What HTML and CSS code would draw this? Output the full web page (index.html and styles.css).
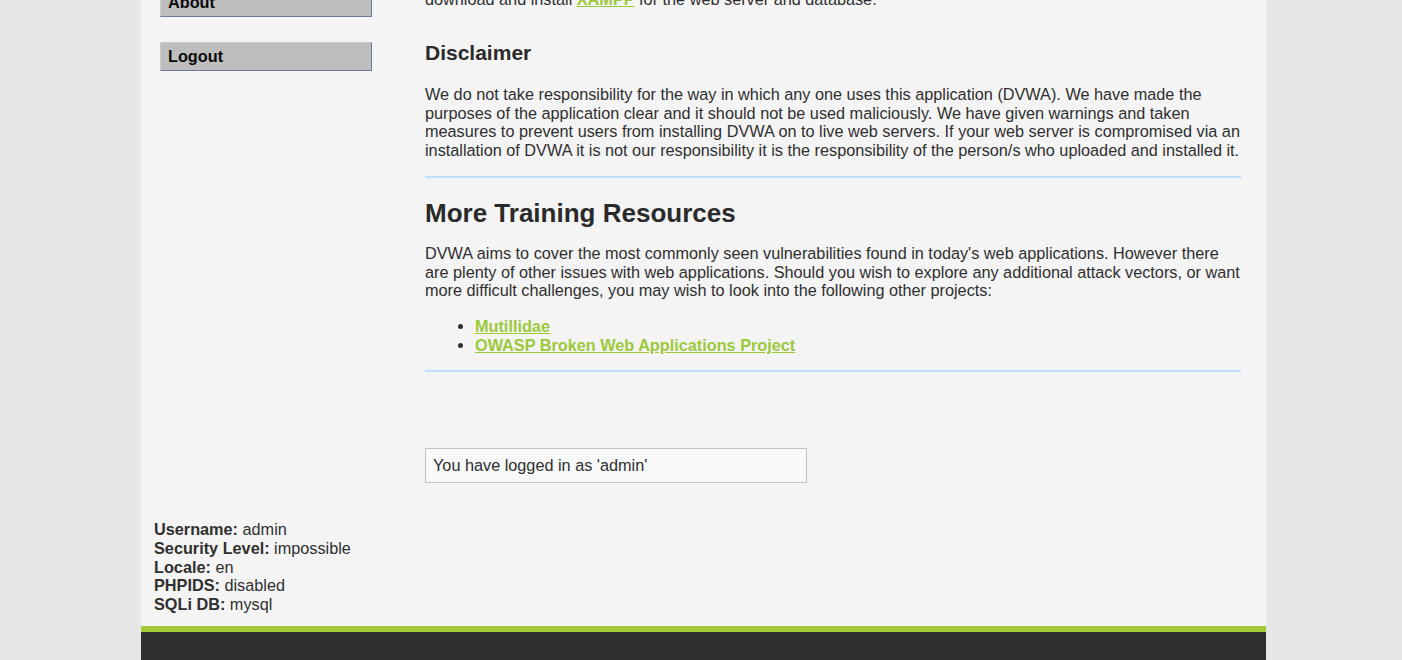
FILE: index.html
```html
<!DOCTYPE html>
<html lang="en">
<head>
<meta charset="utf-8">
<title>Welcome :: Damn Vulnerable Web Application (DVWA)</title>
<link rel="stylesheet" href="styles.css">
</head>
<body>
<div class="page">
  <div class="body-row">
    <div class="menu">
      <ul class="menu-block"><li><a class="menu-btn" href="#">About</a></li></ul>
      <ul class="menu-block"><li><a class="menu-btn" href="#">Logout</a></li></ul>
    </div>
    <div class="main">
      <p class="cut">download and install <a href="#">XAMPP</a> for the web server and database.</p>
      <h3 class="sub-title">Disclaimer</h3>
      <p class="text">We do not take responsibility for the way in which any one uses this application (DVWA). We have made the purposes of the application clear and it should not be used maliciously. We have given warnings and taken measures to prevent users from installing DVWA on to live web servers. If your web server is compromised via an installation of DVWA it is not our responsibility it is the responsibility of the person/s who uploaded and installed it.</p>
      <hr class="rule">
      <h2 class="title">More Training Resources</h2>
      <p class="text text-last">DVWA aims to cover the most commonly seen vulnerabilities found in today's web applications. However there are plenty of other issues with web applications. Should you wish to explore any additional attack vectors, or want more difficult challenges, you may wish to look into the following other projects:</p>
      <ul class="links">
        <li><a href="#">Mutillidae</a></li>
        <li><a href="#">OWASP Broken Web Applications Project</a></li>
      </ul>
      <hr class="rule rule-bottom">
      <div class="message">You have logged in as 'admin'</div>
    </div>
  </div>
  <div class="system-info">
    <em class="label">Username:</em> admin<br>
    <em class="label">Security Level:</em> impossible<br>
    <em class="label">Locale:</em> en<br>
    <em class="label">PHPIDS:</em> disabled<br>
    <em class="label">SQLi DB:</em> mysql
  </div>
  <div class="footer"></div>
</div>
</body>
</html>
```

FILE: styles.css
```css
html, body {
  margin: 0;
  padding: 0;
}

body {
  background: #e7e7e7;
  overflow: hidden;
  font-family: "Liberation Sans", Arial, Helvetica, sans-serif;
  font-size: 16.25px;
  line-height: 18.75px;
  color: #2f2f2f;
}

.page {
  width: 1125px;
  margin: -12px 0 0 141px;
  background: #f4f4f4;
}

.body-row {
  display: flex;
  align-items: flex-start;
}

.menu {
  width: 284px;
  flex: none;
  box-sizing: border-box;
  padding-left: 19px;
}

.menu-block {
  list-style: none;
  margin: 0 0 25px;
  padding: 0;
}

.menu-btn {
  display: block;
  width: 212px;
  box-sizing: border-box;
  padding: 4px 7px;
  background: #bebebe;
  border-top: 1px solid #cdcdcd;
  border-left: 1px solid #cdcdcd;
  border-right: 1px solid #6b7a98;
  border-bottom: 1px solid #6b7a98;
  color: #0a0a0a;
  font-weight: bold;
  text-decoration: none;
}

.main {
  width: 816px;
  flex: none;
}

.main a {
  color: #9bc93a;
  font-weight: bold;
  text-decoration: underline;
}

.cut {
  margin: 2px 0 0;
}

.sub-title {
  margin: 32px 0 20px;
  font-size: 21px;
  line-height: 24px;
  font-weight: bold;
  color: #2a2a2a;
}

.text {
  margin: 0 0 16px;
}

.text-last {
  margin-bottom: 17px;
}

.rule {
  border: 0;
  height: 2px;
  background: #c2dcff;
  margin: 0 0 20px;
}

.rule-bottom {
  margin-bottom: 76px;
}

.title {
  margin: 0 0 16px;
  font-size: 26px;
  line-height: 30px;
  font-weight: bold;
  color: #2a2a2a;
}

.links {
  margin: 0 0 15.5px;
  padding-left: 50px;
}

.message {
  width: 382px;
  box-sizing: border-box;
  padding: 7px 7px;
  background: #f7f8f8;
  border: 1px solid #c2c2c2;
}

.system-info {
  margin-top: 37.25px;
  padding-left: 13px;
  padding-bottom: 12.25px;
}

.label {
  font-style: normal;
  font-weight: bold;
}

.footer {
  height: 60px;
  background: #2f2f2f;
  border-top: 6px solid #a3c935;
}
```
